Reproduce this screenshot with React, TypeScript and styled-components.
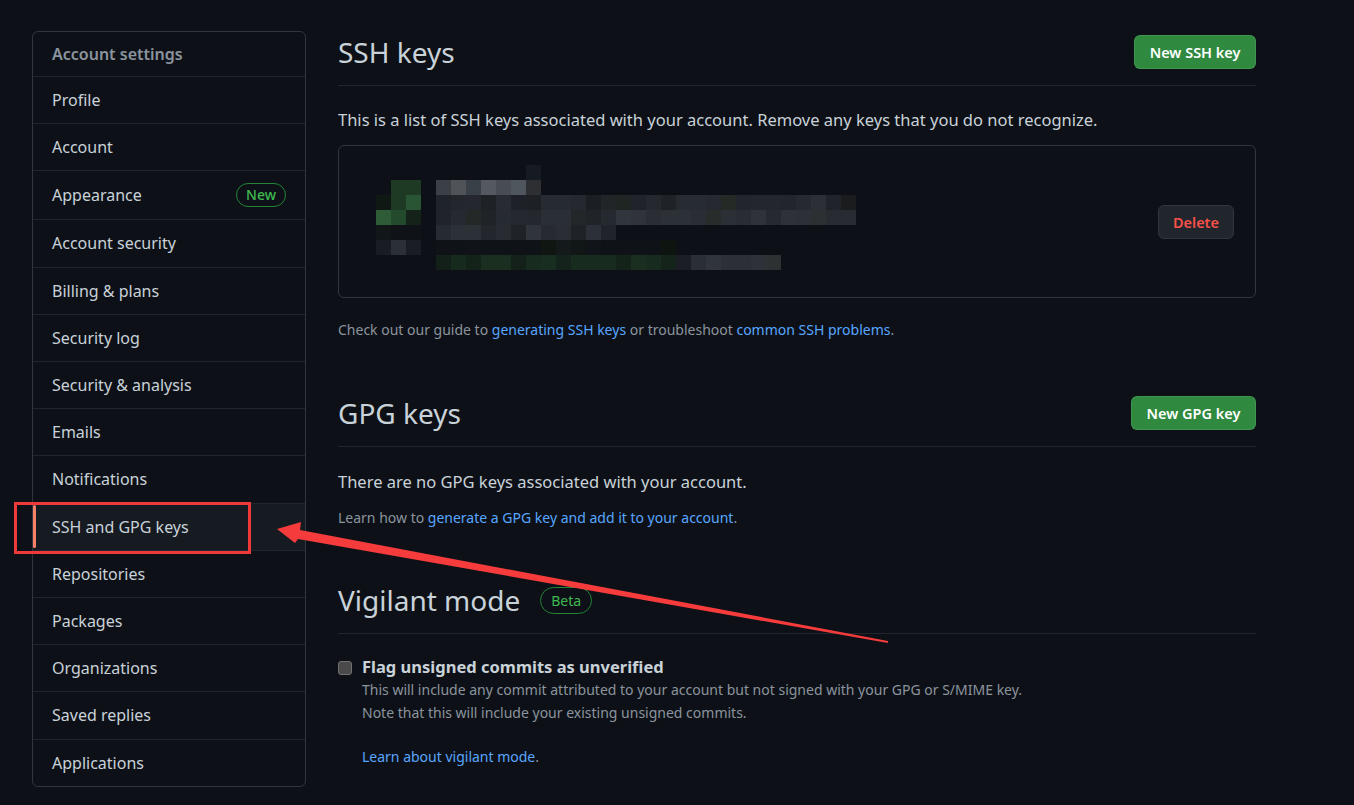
import React from "react";
import styled, { createGlobalStyle } from "styled-components";

const GlobalStyle = createGlobalStyle`
  html, body {
    margin: 0;
    padding: 0;
    background: #0d1117;
  }
  body {
    font-family: "Noto Sans", "Open Sans", Arial, sans-serif;
    color: #c9d1d9;
    font-size: 16px;
  }
  * { box-sizing: border-box; }
`;

const Page = styled.div`
  position: relative;
  width: 1354px;
  min-height: 805px;
  display: grid;
  grid-template-columns: 274px 918px;
  column-gap: 32px;
  padding: 31px 0 0 32px;
`;

const Nav = styled.nav`
  border: 1px solid #30363d;
  border-radius: 6px;
  align-self: start;
  overflow: hidden;
`;

const NavHeader = styled.div`
  padding: 12px 19px 11px;
  line-height: 21px;
  font-weight: 600;
  color: #8b949e;
`;

const NavItem = styled.a<{ $active?: boolean }>`
  position: relative;
  display: flex;
  align-items: center;
  justify-content: space-between;
  padding: 12px 19px;
  line-height: 22.2px;
  border-top: 1px solid #21262d;
  color: #c9d1d9;
  text-decoration: none;
  background: ${(p) => (p.$active ? "#161b22" : "transparent")};

  &::before {
    content: "";
    display: ${(p) => (p.$active ? "block" : "none")};
    position: absolute;
    left: 0;
    top: 1px;
    bottom: 2px;
    width: 3px;
    border-radius: 3px;
    background: #f78166;
  }
`;

const Pill = styled.span<{ $big?: boolean }>`
  display: inline-block;
  padding: 0 ${(p) => (p.$big ? "10px" : "9px")};
  line-height: ${(p) => (p.$big ? "25px" : "22px")};
  font-size: 14px;
  font-weight: ${(p) => (p.$big ? 400 : 500)};
  color: #3fb950;
  border: 1px solid #238636;
  border-radius: 2em;
`;

const Main = styled.main`
  padding-top: 4px;
`;

const Subhead = styled.div<{ $gap?: number }>`
  display: flex;
  align-items: center;
  justify-content: space-between;
  min-height: 34px;
  padding-bottom: 16px;
  border-bottom: 1px solid #21262d;
  margin-top: ${(p) => p.$gap ?? 0}px;
`;

const TitleRow = styled.div`
  display: flex;
  align-items: center;
  gap: 20px;
`;

const Title = styled.h2`
  margin: 0;
  font-size: 28px;
  font-weight: 400;
  line-height: 34px;
  color: #c9d1d9;
`;

const Button = styled.button<{ $danger?: boolean }>`
  height: 34px;
  padding: 0 ${(p) => (p.$danger ? "14px" : "14.5px")};
  font-family: inherit;
  font-size: 14.5px;
  font-weight: 600;
  border-radius: 6px;
  cursor: pointer;
  color: ${(p) => (p.$danger ? "#f85149" : "#ffffff")};
  background: ${(p) => (p.$danger ? "#21262d" : "#2f8a3f")};
  border: 1px solid ${(p) => (p.$danger ? "#30363d" : "rgba(240,246,252,0.1)")};
`;

const Text = styled.p<{ $top: number }>`
  margin: ${(p) => p.$top}px 0 0;
  font-size: 16.5px;
  line-height: 24px;
  color: #c9d1d9;
`;

const Note = styled.p<{ $top: number }>`
  margin: ${(p) => p.$top}px 0 0;
  font-size: 14px;
  line-height: 21px;
  color: #8b949e;
`;

const Link = styled.a`
  color: #58a6ff;
  text-decoration: none;
`;

const KeyBox = styled.div`
  margin-top: 13px;
  height: 153px;
  border: 1px solid #30363d;
  border-radius: 6px;
  display: flex;
  align-items: center;
  justify-content: space-between;
  padding: 0 21px 0 0;
`;

const Check = styled.div`
  margin-top: 22px;
  display: grid;
  grid-template-columns: 14px 1fr;
  column-gap: 10px;
`;

const Box = styled.input`
  appearance: none;
  margin: 5px 0 0;
  width: 14px;
  height: 14px;
  border-radius: 3px;
  background: #4a4a4a;
  border: 1px solid #707070;
`;

const CheckLabel = styled.label`
  font-size: 16.5px;
  font-weight: 700;
  line-height: 22px;
  color: #c9d1d9;
`;

const CheckNote = styled.div<{ $top?: number }>`
  grid-column: 2;
  margin-top: ${(p) => p.$top ?? 0}px;
  font-size: 14px;
  line-height: 22.5px;
  color: #8b949e;
`;

const Overlay = styled.svg`
  position: absolute;
  left: 0;
  top: 0;
  pointer-events: none;
`;

const mosaic: [number, number, string][] = [];
const row = (x0: number, y: number, colors: string[]) =>
  colors.forEach((c, i) => mosaic.push([x0 + i * 15, y, c]));

// blurred key fingerprint, coordinates relative to the key box
row(0, 20, ["#0d1117", "#1e3a25", "#1e3a25"]);
row(0, 35, ["#101814", "#1e3a25", "#2a5535"]);
row(0, 50, ["#2d5c37", "#234a2c", "#15221a"]);
row(0, 65, ["#111618", "#0f1317", "#0f1317"]);
row(0, 80, ["#191c22", "#2b2f36", "#1a1d23"]);
row(75, 5, ["#0d1117", "#0d1117", "#0d1117", "#0d1117", "#0d1117", "#161b22"]);
row(60, 20, ["#3b3f46", "#505358", "#394047", "#545860", "#484c53", "#4f565e", "#2d2f33"]);
row(60, 35, [
  "#1f232a", "#23262c", "#24272d", "#1e2126", "#282b31", "#1e2127", "#1d2025", "#262a31",
  "#262a31", "#25282e", "#1b1e23", "#222528", "#1f2522", "#20232a", "#25282e", "#1f2227",
  "#272b32", "#272b32", "#262a30", "#262a27", "#22262c", "#23272d", "#23262c", "#22252b",
  "#262a30", "#2c3036", "#20232a", "#1b1c1e",
]);
row(60, 50, [
  "#20232a", "#262a30", "#242927", "#202328", "#262a31", "#25282f", "#24282e", "#2a2e35",
  "#2a2e35", "#24272a", "#202328", "#252a30", "#31353c", "#30343a", "#2a2e34", "#2c3037",
  "#2c3037", "#2a2d33", "#282c2b", "#2b3036", "#2a2c33", "#2f3339", "#262a30", "#2e3238",
  "#2d3137", "#2c3032", "#282b31", "#282b31",
]);
row(60, 65, [
  "#262a31", "#2c3037", "#2c3037", "#23262c", "#282b31", "#1f2227", "#30343b", "#272a30",
  "#2a2e34", "#1f2227", "#2c3038", "#20232a",
]);
row(60, 80, [
  "#0f1317", "#0f1317", "#101418", "#0f1317", "#0f1317", "#0f1317", "#0f1317", "#101612",
  "#141a1c", "#111716", "#11151a", "#0f1317", "#0f1317", "#0f1317", "#0f1317", "#0e1410",
]);
row(60, 95, [
  "#13201a", "#172a1e", "#14231a", "#1a2f20", "#1a2f20", "#13211a", "#172b1e", "#182e20",
  "#14231b", "#182b1f", "#182b1f", "#172b1e", "#14231a", "#1a2f20", "#182b1f", "#15241b",
  "#1b1e24", "#2a2e35", "#30343b", "#2c3036", "#2c3036", "#2e3238", "#2e3131",
]);

const sidebar = [
  "Profile",
  "Account",
  "Appearance",
  "Account security",
  "Billing & plans",
  "Security log",
  "Security & analysis",
  "Emails",
  "Notifications",
  "SSH and GPG keys",
  "Repositories",
  "Packages",
  "Organizations",
  "Saved replies",
  "Applications",
];

export default function App() {
  return (
    <>
      <GlobalStyle />
      <Page>
        <Nav>
          <NavHeader>Account settings</NavHeader>
          {sidebar.map((name) => (
            <NavItem key={name} href="#" $active={name === "SSH and GPG keys"}>
              {name}
              {name === "Appearance" && <Pill>New</Pill>}
            </NavItem>
          ))}
        </Nav>

        <Main>
          <Subhead>
            <Title>SSH keys</Title>
            <Button>New SSH key</Button>
          </Subhead>
          <Text $top={22}>
            This is a list of SSH keys associated with your account. Remove any keys that you do not
            recognize.
          </Text>
          <KeyBox>
            <svg width="540" height="153" viewBox="-37 -15 540 153">
              {mosaic.map(([x, y, c], i) => (
                <rect key={i} x={x} y={y} width="15" height="15" fill={c} />
              ))}
            </svg>
            <Button $danger>Delete</Button>
          </KeyBox>
          <Note $top={21}>
            Check out our guide to <Link href="#">generating SSH keys</Link> or troubleshoot{" "}
            <Link href="#">common SSH problems</Link>.
          </Note>

          <Subhead $gap={56}>
            <Title>GPG keys</Title>
            <Button>New GPG key</Button>
          </Subhead>
          <Text $top={23}>There are no GPG keys associated with your account.</Text>
          <Note $top={13}>
            Learn how to <Link href="#">generate a GPG key and add it to your account</Link>.
          </Note>

          <Subhead $gap={55}>
            <TitleRow>
              <Title>Vigilant mode</Title>
              <Pill $big>Beta</Pill>
            </TitleRow>
          </Subhead>
          <Check>
            <Box type="checkbox" id="vigilant" />
            <CheckLabel htmlFor="vigilant">Flag unsigned commits as unverified</CheckLabel>
            <CheckNote $top={1}>
              This will include any commit attributed to your account but not signed with your GPG or
              S/MIME key.
              <br />
              Note that this will include your existing unsigned commits.
            </CheckNote>
            <CheckNote $top={22}>
              <Link href="#">Learn about vigilant mode</Link>.
            </CheckNote>
          </Check>
        </Main>

        <Overlay width="1354" height="805" viewBox="0 0 1354 805">
          <rect x="15.5" y="503.5" width="234" height="49" fill="none" stroke="#f03a3a" strokeWidth="3" />
          <polygon
            points="277,529 301,522 300,530 888,641 888,643 298,539 295,543"
            fill="#f53b3b"
          />
        </Overlay>
      </Page>
    </>
  );
}
